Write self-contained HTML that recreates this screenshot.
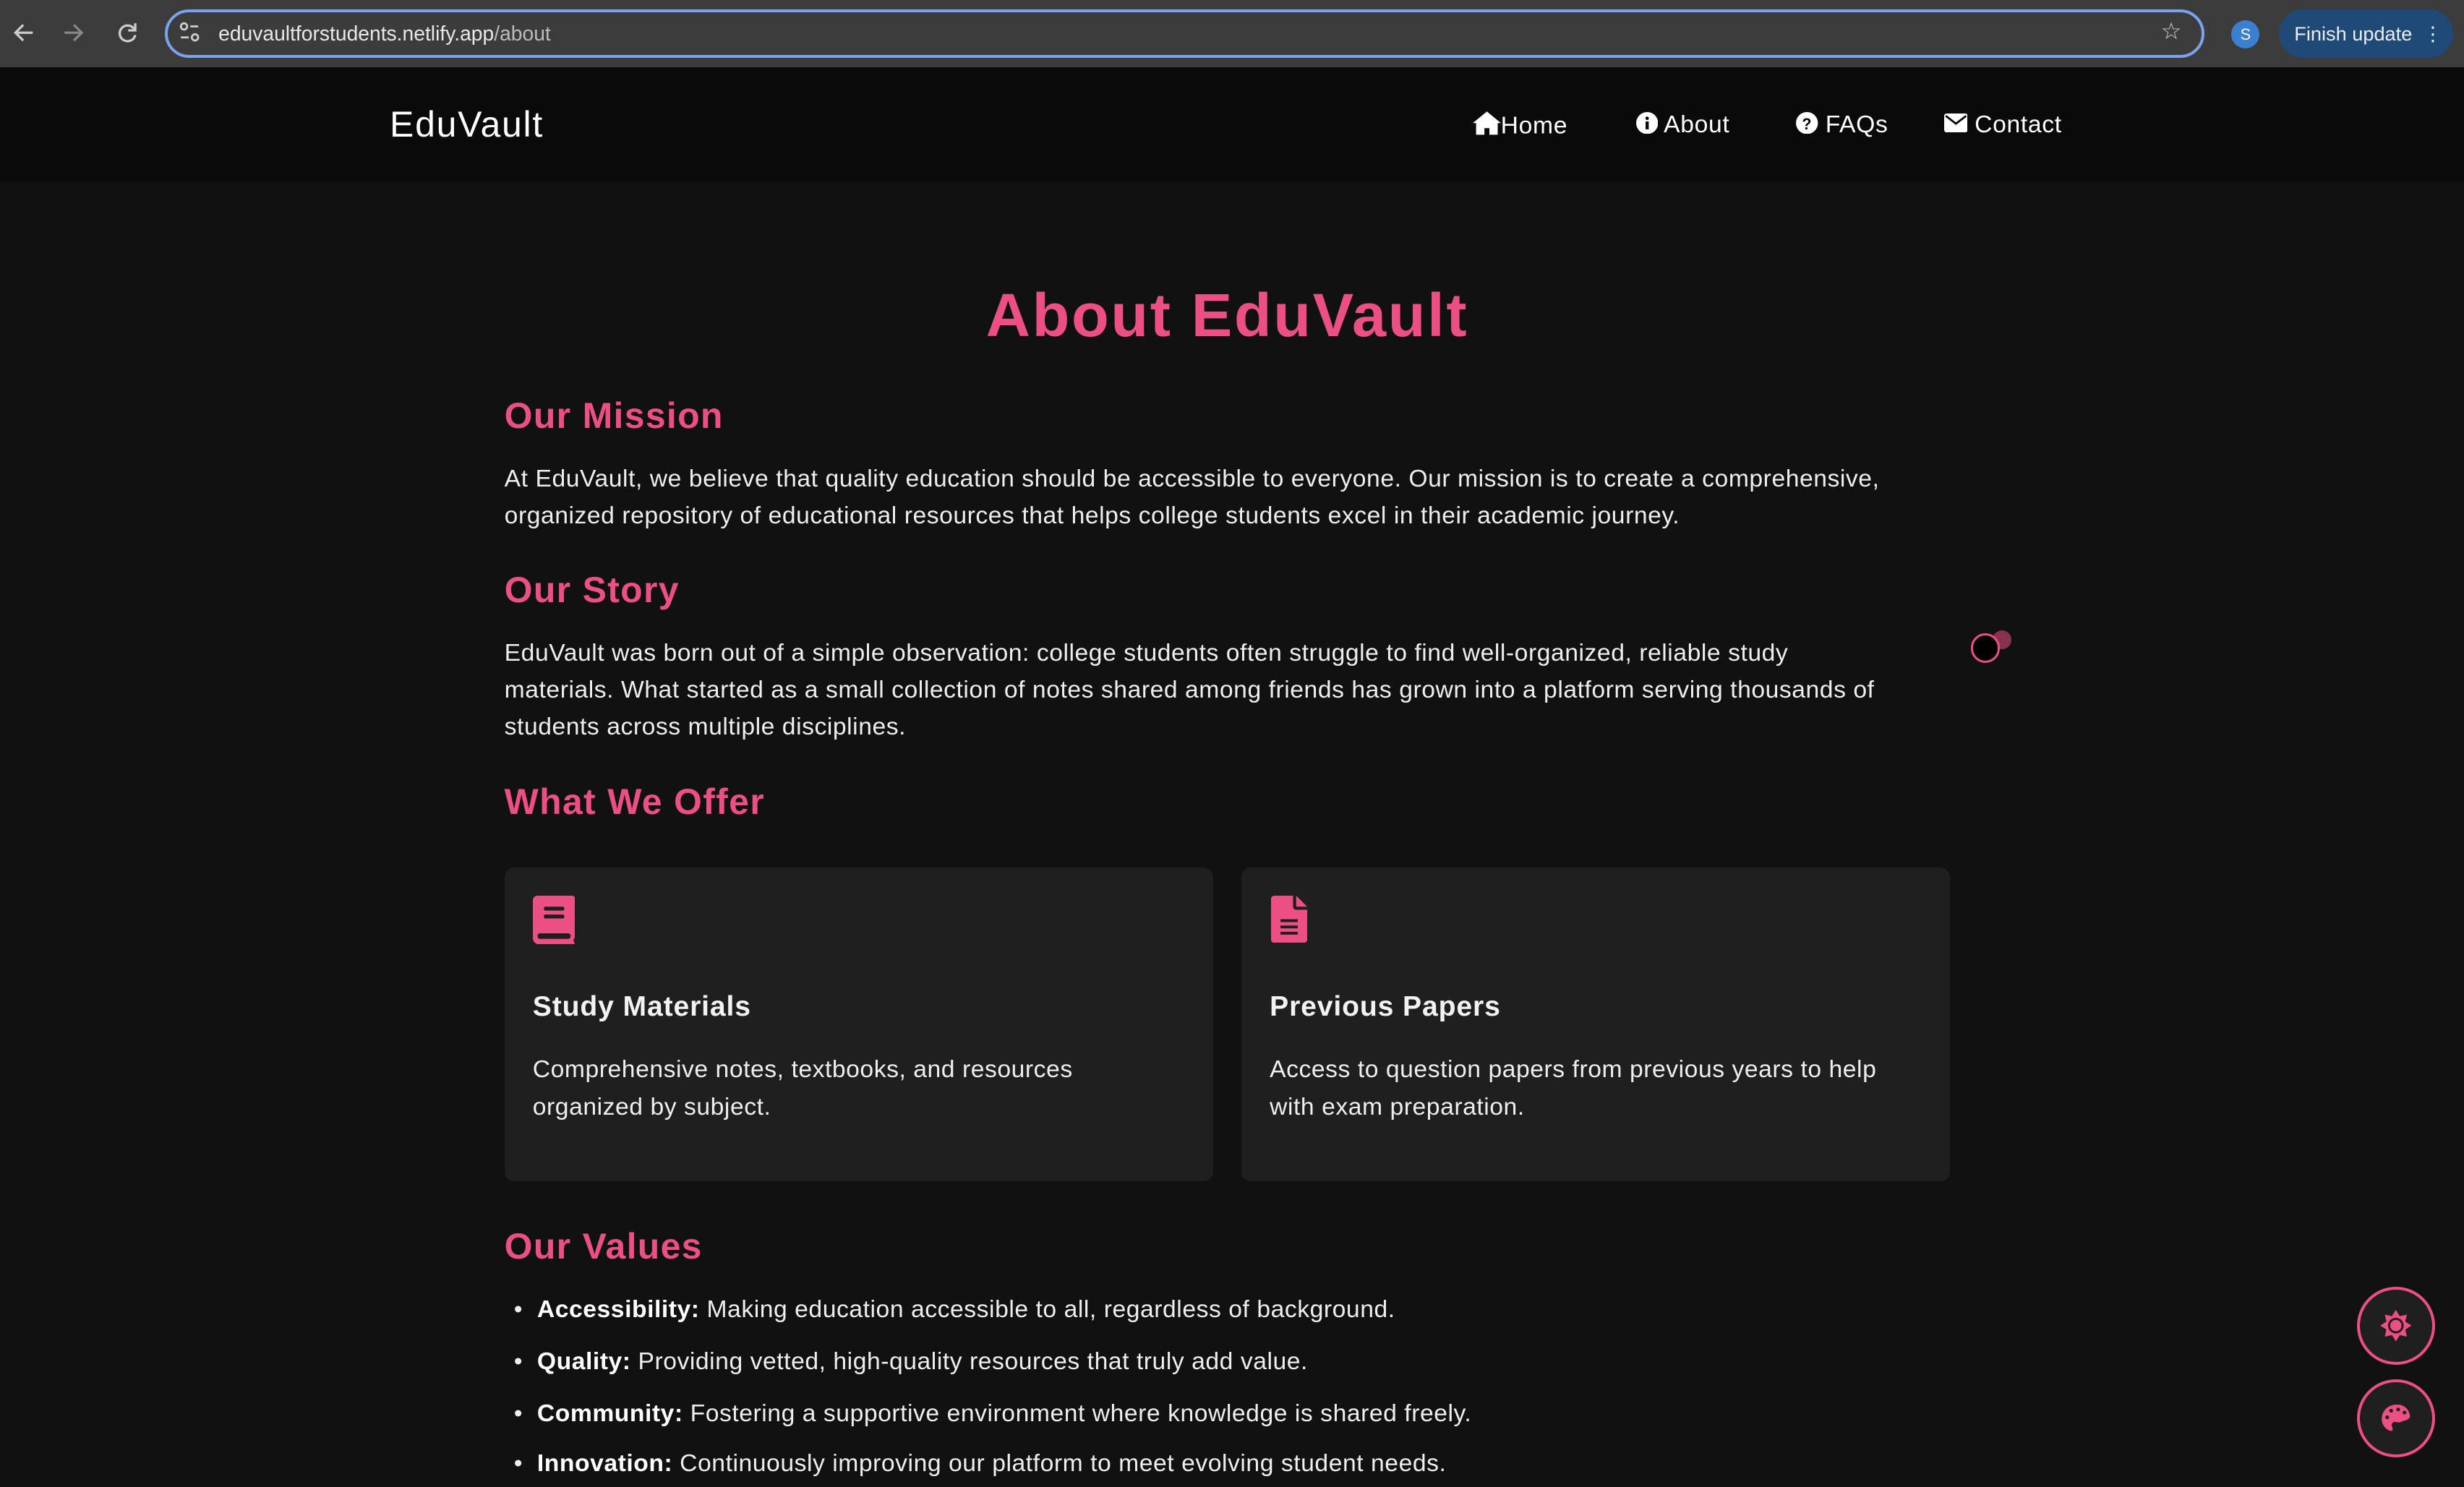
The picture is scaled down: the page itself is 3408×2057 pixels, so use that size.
<!DOCTYPE html>
<html><head><meta charset="utf-8">
<style>
html,body{margin:0;padding:0;background:#111;overflow:hidden}
body{width:1568px;height:946.5px;zoom:2.17347;position:relative;font-family:"Liberation Sans",sans-serif;color:#f2f2f2}
.a{position:absolute}
.chrome{left:0;top:0;width:1568px;height:43px;background:#3c3c3c}
.url{left:105px;top:6px;width:1298px;height:31px;border:2px solid #7aa2ee;border-radius:16px;background:#3c3c3c;box-sizing:border-box}
.nav{left:0;top:43px;width:1568px;height:73px;background:#0a0a0a}
.pink{color:#ec4f84}
h2{margin:0;font-size:23px;font-weight:bold;color:#ec4f84;position:absolute;left:321px;letter-spacing:0.6px}
p{margin:0;font-size:15.5px;line-height:23.5px;position:absolute;left:321px;width:960px;color:#eee;letter-spacing:0.25px;white-space:nowrap}
.card{background:#1f1f1f;border-radius:6px;width:451px;height:200px;top:552px}
.card h3{position:absolute;left:18px;top:79px;margin:0;font-size:18px;font-weight:bold;color:#f2f2f2;letter-spacing:0.4px}
.card div{position:absolute;left:18px;top:117px;width:430px;font-size:15.5px;line-height:24px;color:#eee;letter-spacing:0.25px;white-space:nowrap}
.li{left:327px;font-size:15.5px;color:#eee;letter-spacing:0.25px;white-space:nowrap}
.li b{color:#fff}
.fab{width:46px;height:46px;border:2px solid #ec4f84;border-radius:50%;background:#1f1f1f;left:1500px}
.nl{position:absolute;top:71px;font-size:15.5px;color:#fff;white-space:nowrap;letter-spacing:0.3px}
</style></head><body>
<div class="a chrome"></div>
<svg class="a" style="left:8px;top:14px" width="14" height="14" viewBox="0 0 14 14"><path d="M13 7H2M7 2L2 7l5 5" stroke="#ccc" stroke-width="1.5" fill="none"/></svg>
<svg class="a" style="left:40px;top:14px" width="14" height="14" viewBox="0 0 14 14"><path d="M1 7h11M7 2l5 5-5 5" stroke="#888" stroke-width="1.5" fill="none"/></svg>
<svg class="a" style="left:74px;top:14px" width="14" height="14" viewBox="0 0 14 14"><path d="M11.5 5A5 5 0 1 0 12 8.5" stroke="#ccc" stroke-width="1.5" fill="none"/><path d="M12 1v4.5H7.5" stroke="#ccc" stroke-width="1.5" fill="none"/></svg>
<div class="a url"></div>
<svg class="a" style="left:114px;top:14px" width="13" height="13" viewBox="0 0 13 13"><circle cx="3" cy="3" r="2" stroke="#ccc" stroke-width="1.3" fill="none"/><path d="M7 3h5M1 10h5" stroke="#ccc" stroke-width="1.3"/><circle cx="10" cy="10" r="2" stroke="#ccc" stroke-width="1.3" fill="none"/></svg>
<div class="a" style="left:139px;top:14px;font-size:13px;color:#e8e8e8">eduvaultforstudents.netlify.app<span style="color:#bbb">/about</span></div>
<div class="a" style="left:1375px;top:11px;color:#ccc;font-size:15px">&#9734;</div>
<div class="a" style="left:1420px;top:13px;width:18px;height:18px;border-radius:50%;background:#3b7fd0;color:#fff;font-size:10px;text-align:center;line-height:18px">S</div>
<div class="a" style="left:1450px;top:6px;width:111px;height:31px;border-radius:16px;background:#1f4a78;color:#e8eefa;font-size:12.5px;line-height:31px;padding-left:10px;box-sizing:border-box">Finish update &nbsp;&#8942;</div>

<div class="a nav"></div>
<div class="a" style="left:248px;top:66px;font-size:23px;color:#fff;letter-spacing:0.8px">EduVault</div>
<div class="nl" style="left:937px"><svg width="18" height="15" viewBox="0 0 17 14" style="vertical-align:-1px"><path d="M8.5 0L0 7h2v7h5V10h3v4h5V7h2z" fill="#fff"/></svg>Home</div>
<div class="nl" style="left:1041px"><svg width="14" height="14" viewBox="0 0 14 14" style="vertical-align:-1px"><circle cx="7" cy="7" r="7" fill="#fff"/><rect x="6" y="6" width="2" height="5" fill="#0a0a0a"/><circle cx="7" cy="4" r="1.1" fill="#0a0a0a"/></svg> About</div>
<div class="nl" style="left:1143px"><svg width="14" height="14" viewBox="0 0 14 14" style="vertical-align:-1px"><circle cx="7" cy="7" r="7" fill="#fff"/><text x="7" y="11" font-size="10" font-weight="bold" text-anchor="middle" fill="#0a0a0a" font-family="Liberation Sans">?</text></svg> FAQs</div>
<div class="nl" style="left:1237px"><svg width="15" height="12" viewBox="0 0 15 12" style="vertical-align:0"><rect width="15" height="12" rx="1.5" fill="#fff"/><path d="M1 1.5l6.5 5 6.5-5" stroke="#0a0a0a" stroke-width="1.3" fill="none"/></svg> Contact</div>

<div class="a pink" style="left:0;width:1562px;text-align:center;top:178px;font-size:39px;font-weight:bold;letter-spacing:1.2px">About EduVault</div>
<h2 style="top:251px">Our Mission</h2>
<p style="top:293px">At EduVault, we believe that quality education should be accessible to everyone. Our mission is to create a comprehensive,<br>organized repository of educational resources that helps college students excel in their academic journey.</p>
<h2 style="top:362px">Our Story</h2>
<p style="top:404px">EduVault was born out of a simple observation: college students often struggle to find well-organized, reliable study<br>materials. What started as a small collection of notes shared among friends has grown into a platform serving thousands of<br>students across multiple disciplines.</p>
<h2 style="top:497px">What We Offer</h2>

<div class="a card" style="left:321px">
<svg class="a" style="left:18px;top:18px" width="27" height="31" viewBox="0 0 27 31"><path d="M3 0h22a2 2 0 0 1 2 2v24a2 2 0 0 1-1 1.5v2h0.5v1.5H4a4 4 0 0 1-4-4V3a3 3 0 0 1 3-3z" fill="#ec4f84"/><rect x="7" y="7" width="13" height="2.5" rx="1" fill="#1f1f1f"/><rect x="7" y="12" width="13" height="2.5" rx="1" fill="#1f1f1f"/><rect x="3" y="24" width="21" height="3.5" rx="1.5" fill="#1f1f1f"/></svg>
<h3>Study Materials</h3>
<div>Comprehensive notes, textbooks, and resources<br>organized by subject.</div>
</div>
<div class="a card" style="left:790px">
<svg class="a" style="left:19px;top:18px" width="23" height="30" viewBox="0 0 23 30"><path d="M2 0h12v7a2 2 0 0 0 2 2h7v19a2 2 0 0 1-2 2H2a2 2 0 0 1-2-2V2a2 2 0 0 1 2-2zM16 0l7 7h-7z" fill="#ec4f84"/><rect x="6" y="15" width="11" height="1.8" fill="#1f1f1f"/><rect x="6" y="19" width="11" height="1.8" fill="#1f1f1f"/><rect x="6" y="23" width="11" height="1.8" fill="#1f1f1f"/></svg>
<h3>Previous Papers</h3>
<div>Access to question papers from previous years to help<br>with exam preparation.</div>
</div>

<h2 style="top:780px">Our Values</h2>
<div class="a li" style="top:825px">&#8226; &nbsp;<b>Accessibility:</b> Making education accessible to all, regardless of background.</div>
<div class="a li" style="top:858px">&#8226; &nbsp;<b>Quality:</b> Providing vetted, high-quality resources that truly add value.</div>
<div class="a li" style="top:891px">&#8226; &nbsp;<b>Community:</b> Fostering a supportive environment where knowledge is shared freely.</div>
<div class="a li" style="top:923px">&#8226; &nbsp;<b>Innovation:</b> Continuously improving our platform to meet evolving student needs.</div>

<div class="a" style="left:1268px;top:401px;width:12px;height:12px;border-radius:50%;background:#ec4f84;opacity:.55"></div>
<div class="a" style="left:1254px;top:403px;width:16px;height:16px;border-radius:50%;background:#000;border:1.5px solid #ec4f84"></div>

<div class="a fab" style="top:819px"><svg style="position:absolute;left:13px;top:13px" width="20" height="20" viewBox="0 0 20 20"><polygon points="10,0 12.5,4 17,3 16,7.5 20,10 16,12.5 17,17 12.5,16 10,20 7.5,16 3,17 4,12.5 0,10 4,7.5 3,3 7.5,4" fill="#ec4f84"/><circle cx="10" cy="10" r="5" fill="#1f1f1f"/><circle cx="10" cy="10" r="3.6" fill="#ec4f84"/></svg></div>
<div class="a fab" style="top:878px"><svg style="position:absolute;left:13px;top:13px" width="20" height="20" viewBox="0 0 20 20"><path d="M10 1a9 9 0 0 0-9 9c0 3 1.5 5.5 4 7 1.5 1 3 1 3-.5 0-1.5-1.5-2.5 0-4s3 .5 5-.5 6-1 6-4a8 8 0 0 0-9-7z" fill="#ec4f84"/><circle cx="4.5" cy="9" r="1.2" fill="#1f1f1f"/><circle cx="7" cy="4.8" r="1.2" fill="#1f1f1f"/><circle cx="11.5" cy="4" r="1.2" fill="#1f1f1f"/><circle cx="15.5" cy="6" r="1.2" fill="#1f1f1f"/></svg></div>
</body></html>
